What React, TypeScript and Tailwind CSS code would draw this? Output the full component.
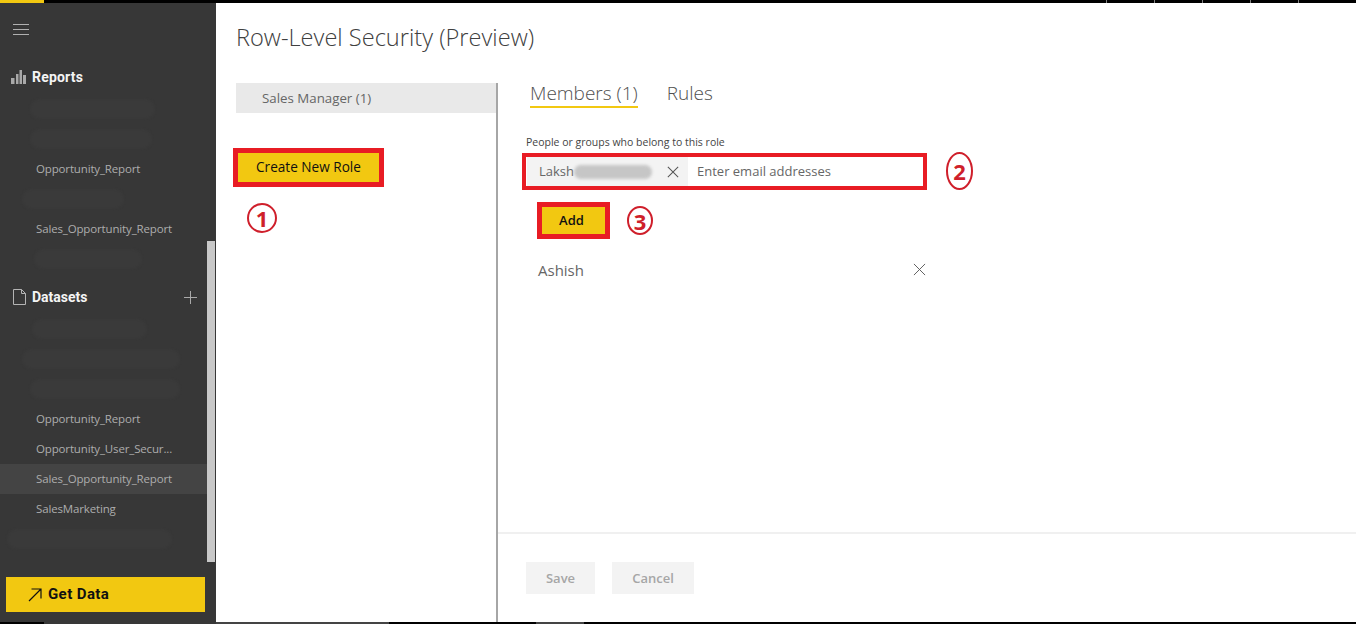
const seg = "font-['Open_Sans','Noto_Sans',sans-serif]";

function Smudge({ w, ml = 'ml-[30px]' }: { w: string; ml?: string }) {
  return <div className={`h-[20px] rounded-full bg-[#3a3a3a] blur-[1px] ${w} ${ml}`} />;
}

function NavRow({ label, active }: { label: string; active?: boolean }) {
  return (
    <div className={`flex h-[30px] items-center pl-9 text-[11.5px] tracking-[-0.15px] text-[#adadad] ${active ? 'bg-[#444444]' : ''}`}>
      {label}
    </div>
  );
}

function BlobRow({ w, ml }: { w: string; ml?: string }) {
  return (
    <div className="flex h-[30px] items-center">
      <Smudge w={w} ml={ml} />
    </div>
  );
}

function Circled({ n, cls }: { n: string; cls: string }) {
  return (
    <div className={`flex shrink-0 items-center justify-center rounded-[50%] border-[2.5px] border-[#cf1f2b] text-[22px] font-bold leading-none text-[#cf1f2b] ${cls}`}>
      {n}
    </div>
  );
}

function Cross({ size = 14, color = '#555555', sw = 1 }: { size?: number; color?: string; sw?: number }) {
  return (
    <svg width={size} height={size} viewBox="0 0 14 14" fill="none" stroke={color} strokeWidth={sw}>
      <path d="M1 1l12 12M13 1L1 13" />
    </svg>
  );
}

export default function App() {
  return (
    <div className={`flex h-[624px] w-[1356px] flex-col overflow-hidden bg-white ${seg}`}>
      <div className="flex h-[3px] shrink-0 bg-black">
        <div className="h-[3px] w-[44px] bg-[#f2c811]" />
        <div className="ml-[1062px] flex gap-[47px]">
          <div className="h-[3px] w-px bg-[#808080]" />
          <div className="h-[3px] w-px bg-[#808080]" />
          <div className="h-[3px] w-px bg-[#808080]" />
          <div className="h-[3px] w-px bg-[#808080]" />
          <div className="h-[3px] w-px bg-[#808080]" />
        </div>
      </div>
      <div className="flex min-h-0 flex-1">
        <aside className="flex w-[216px] shrink-0 bg-[#373737]">
          <div className="flex min-w-0 flex-1 flex-col">
            <div className="flex h-[52px] shrink-0 items-center pl-[13px]">
              <svg width="16" height="11" viewBox="0 0 16 11" stroke="#b0b0b0" strokeWidth="1">
                <path d="M0 .5h16M0 5.500h16M0 10.500h16" />
              </svg>
            </div>
            <div className="flex h-[39px] shrink-0 items-center pl-[11px] pt-[5px]">
              <svg width="15" height="14" viewBox="0 0 15 14" fill="#a9a9a9" className="mr-[6px]">
                <path d="M0 8h3.500v6H0zM5 4h2.500v10H5zM8.500 0H11v14H8.500zM12 5h3v9h-3z" />
              </svg>
              <span className="font-['Roboto',sans-serif] text-[14px] font-bold tracking-[0.2px] text-[#f4f4f4]">Reports</span>
            </div>
            <BlobRow w="w-[125px]" />
            <BlobRow w="w-[122px]" />
            <NavRow label="Opportunity_Report" />
            <BlobRow w="w-[102px]" ml="ml-[22px]" />
            <NavRow label="Sales_Opportunity_Report" />
            <BlobRow w="w-[108px]" ml="ml-[34px]" />
            <div className="flex h-[40px] shrink-0 items-center pl-[13px] pr-[10px] pt-[6px]">
              <svg width="13" height="16" viewBox="0 0 13 16" fill="none" stroke="#b4b4b4" strokeWidth="1" className="mr-[6px]">
                <path d="M.5.500h8l4 4v11H.5zM8.500.500v4h4" />
              </svg>
              <span className="flex-1 font-['Roboto',sans-serif] text-[14px] font-bold text-[#f4f4f4]">Datasets</span>
              <svg width="13" height="13" viewBox="0 0 13 13" stroke="#a9a9a9" strokeWidth="1">
                <path d="M6.500 0v13M0 6.500h13" />
              </svg>
            </div>
            <BlobRow w="w-[115px]" ml="ml-[32px]" />
            <BlobRow w="w-[158px]" ml="ml-[22px]" />
            <BlobRow w="w-[150px]" ml="ml-[30px]" />
            <NavRow label="Opportunity_Report" />
            <NavRow label="Opportunity_User_Secur..." />
            <NavRow label="Sales_Opportunity_Report" active />
            <NavRow label="SalesMarketing" />
            <BlobRow w="w-[165px]" ml="ml-[7px]" />
            <div className="flex flex-1 items-end pb-[10px] pl-[6px]">
              <div className="flex h-[35px] w-[199px] shrink-0 items-center bg-[#f2c811] pl-[22px] pr-2">
                <svg width="14" height="14" viewBox="0 0 14 14" fill="none" stroke="#111111" strokeWidth="1.200" className="mr-[6px]">
                  <path d="M1 13L13 1M3.500 1H13v9.500" />
                </svg>
                <span className="font-['Roboto',sans-serif] text-[15px] font-bold tracking-[0.4px] text-[#111111]">Get Data</span>
              </div>
            </div>
          </div>
          <div className="flex w-[9px] shrink-0 flex-col pt-[238px]">
            <div className="h-[321px] w-[8px] bg-[#c8c8c8]" />
          </div>
        </aside>

        <main className="flex min-w-0 flex-1 flex-col">
          <h1 className="h-[80px] shrink-0 pl-5 pt-[16px] text-[23.6px] font-light leading-[36px] text-[#404040]">
            Row-Level Security (Preview)
          </h1>
          <div className="flex min-h-0 flex-1">
            <section className="w-[282px] shrink-0 border-r-2 border-[#a6a6a6]">
              <div className="ml-5 flex h-[30px] items-center bg-[#e9e9e9] pl-[26px] pt-px text-[13.300px] text-[#666666]">
                Sales Manager (1)
              </div>
              <div className="ml-[17px] mt-[35px] flex h-[39px] w-[151px] items-center justify-center border-[5px] border-[#e81c24] bg-[#f2c811] text-[13.600px] text-[#111111]">
                Create New Role
              </div>
              <Circled n="1" cls="ml-[31px] mt-[16px] h-[30px] w-[30px]" />
            </section>

            <section className="flex min-w-0 flex-1 flex-col">
              <div className="flex-1 pl-[28px]">
                <div className="flex h-[25px] items-start gap-[29px] pl-1 text-[19px] font-light leading-[20px] text-[#505050]">
                  <span className="h-[25px] border-b-2 border-[#f2c811]">Members (1)</span>
                  <span>Rules</span>
                </div>
                <div className="mt-[27px] h-[14px] text-[10.500px] leading-[14px] text-[#444444]">People or groups who belong to this role</div>
                <div className="flex items-center">
                  <div className="-ml-1 mt-[3px] flex h-[37px] w-[405px] items-stretch border-[4px] border-[#e81c24] pl-px">
                    <div className="flex w-[161px] items-center bg-[#f3f3f3] pl-[12px] pr-[9px] pt-px text-[13px] text-[#666666]">
                      <span>Laksh</span>
                      <span className="h-[14px] w-[78px] rounded-full bg-[#c6c6c6] blur-[1.5px]" />
                      <span className="flex-1" />
                      <Cross size={12} sw={1.200} />
                    </div>
                    <div className="flex items-center pl-[9px] pt-[2px] text-[13px] text-[#666666]">Enter email addresses</div>
                  </div>
                  <Circled n="2" cls="ml-[19px] mt-[3px] h-[38px] w-[27px]" />
                </div>
                <div className="ml-[11px] mt-[12px] flex items-center">
                  <div className="flex h-[37px] w-[73px] items-center justify-center border-[5px] border-[#e81c24] bg-[#f2c811] pr-[4px] text-[13px] font-semibold text-[#111111]">
                    Add
                  </div>
                  <Circled n="3" cls="ml-[17px] h-[29px] w-[26px]" />
                </div>
                <div className="mt-[16px] flex h-[30px] w-[400px] items-center justify-between pl-[12px] text-[15px] text-[#666666]">
                  <span>Ashish</span>
                  <div className="mb-[2px]">
                    <Cross size={13} />
                  </div>
                </div>
              </div>
              <div className="flex h-[90px] shrink-0 gap-[17px] border-t-2 border-[#f0f0f0] pl-[28px] pt-[28px]">
                <div className="flex h-[32px] w-[69px] items-center justify-center bg-[#f3f3f3] pt-px text-[13px] font-semibold text-[#a6a6a6]">Save</div>
                <div className="flex h-[32px] w-[82px] items-center justify-center bg-[#f3f3f3] pt-px text-[13px] font-semibold text-[#a6a6a6]">Cancel</div>
              </div>
            </section>
          </div>
        </main>
      </div>
      <div className="flex h-[2px] shrink-0 bg-black">
        <div className="w-[44px]" />
        <div className="w-[172px] bg-[#373737]" />
        <div className="w-[173px] bg-[#444444]" />
        <div className="w-[147px]" />
        <div className="w-[48px] bg-[#444444]" />
      </div>
    </div>
  );
}
